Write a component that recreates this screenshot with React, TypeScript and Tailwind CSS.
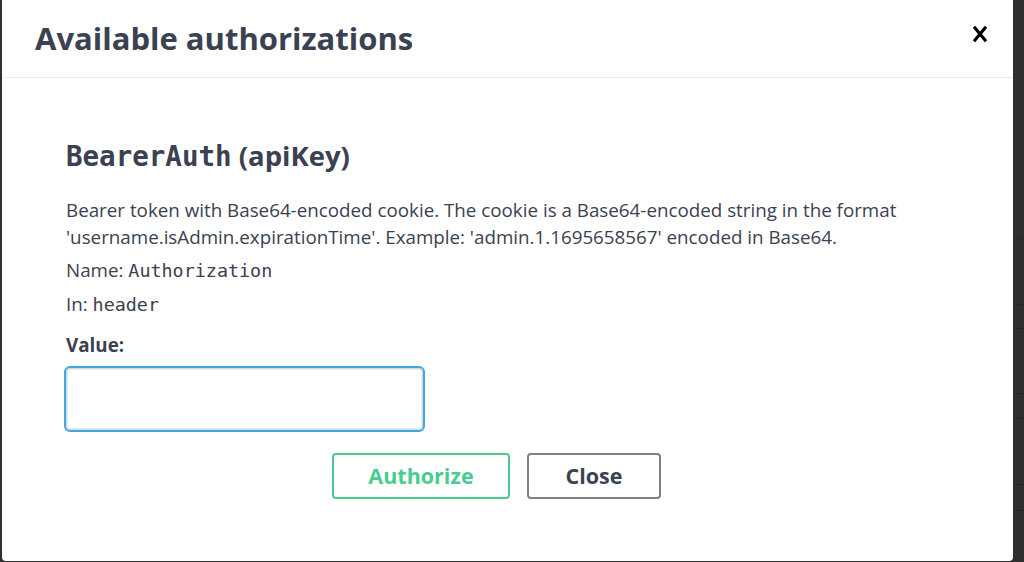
import React from "react";

const mono = { fontFamily: '"DejaVu Sans Mono", monospace' };

export default function App() {
  const lines = [
    { y: 238, c: "bg-[#1b2a3d]" },
    { y: 304, c: "bg-[#1b2a3d]" },
    { y: 328, c: "bg-[#14301f]" },
    { y: 393, c: "bg-[#14301f]" },
    { y: 418, c: "bg-[#14301f]" },
    { y: 484, c: "bg-[#14301f]" },
    { y: 510, c: "bg-[#14301f]" },
  ];
  return (
    <div className="relative h-[562px] w-[1024px] overflow-hidden bg-[#2f2f2f]" style={{ fontFamily: '"Open Sans", sans-serif' }}>
      <div className="absolute right-0 top-0 h-full w-[11px]">
        {lines.map((l, i) => (
          <div key={i} className={`absolute left-0 h-px w-full ${l.c}`} style={{ top: l.y }} />
        ))}
      </div>
      <div className="ml-[2px] flex h-[561px] w-[1011px] flex-col rounded-b-[4px] bg-white">
        <div className="flex h-[78px] shrink-0 items-center justify-between border-b border-[#ebebeb] pl-[33px] pr-[26px]">
          <h3 className="text-[31px] font-bold leading-none text-[#3b4151]">Available authorizations</h3>
          <svg width="14" height="16" viewBox="0 0 14 16" className="mt-[-10px]">
            <path d="M2 2 L12 14 M12 2 L2 14" stroke="#000" strokeWidth="3.2" strokeLinecap="square" />
          </svg>
        </div>
        <div className="flex flex-col pl-[64px] pr-[40px] pt-[60px] text-[#3b4151]">
          <h4 className="text-[27.5px] font-bold leading-[36px]">
            <code style={mono}>BearerAuth</code> (apiKey)
          </h4>
          <div className="mt-[23px] text-[18.8px] leading-[27px]">
            Bearer token with Base64-encoded cookie. The cookie is a Base64-encoded string in the format
            <br />
            'username.isAdmin.expirationTime'. Example: 'admin.1.1695658567' encoded in Base64.
          </div>
          <div className="mt-[6px] text-[18.8px] leading-[27px]">
            Name: <code style={mono} className="text-[18.4px]">Authorization</code>
          </div>
          <div className="mt-[7px] text-[18.8px] leading-[27px]">
            In: <code style={mono} className="text-[18.4px]">header</code>
          </div>
          <label className="mt-[14px] text-[18.8px] font-bold leading-[27px]">Value:</label>
          <input className="ml-[-2px] mt-[7px] h-[66px] w-[361px] rounded-[6px] border-2 border-[#3ea8e6] px-2 shadow-[inset_0_0_0_1.5px_#d9d9d9] outline-none" />
          <div className="mt-[21px] flex gap-[17px] pl-[266px]">
            <button className="h-[46px] w-[178px] rounded-[4px] border-2 border-[#49cc90] text-[21.5px] font-bold text-[#49cc90]">Authorize</button>
            <button className="h-[46px] w-[134px] rounded-[4px] border-2 border-[#808080] text-[21.5px] font-bold text-[#3b4151]">Close</button>
          </div>
        </div>
      </div>
    </div>
  );
}
